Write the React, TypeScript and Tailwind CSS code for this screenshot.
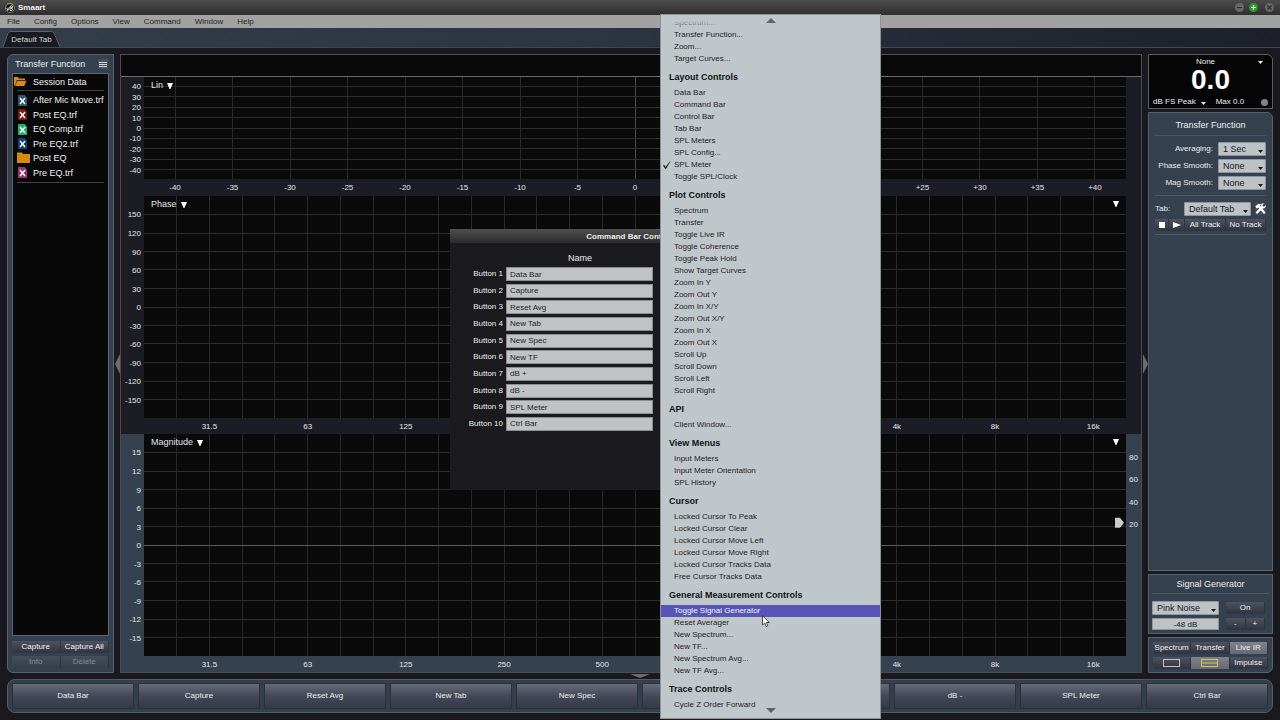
import { type ReactNode } from 'react';

const menuBar = ['File', 'Config', 'Options', 'View', 'Command', 'Window', 'Help'];

const commands = [
  'Data Bar',
  'Capture',
  'Reset Avg',
  'New Tab',
  'New Spec',
  'New TF',
  'dB +',
  'dB -',
  'SPL Meter',
  'Ctrl Bar',
];

const sessionItems = [
  { name: 'After Mic Move.trf', color: '#2f5676' },
  { name: 'Post EQ.trf', color: '#7a1512' },
  { name: 'EQ Comp.trf', color: '#1fae72' },
  { name: 'Pre EQ2.trf', color: '#173f80' },
  { name: 'Post EQ', color: null },
  { name: 'Pre EQ.trf', color: '#9a3573' },
];

const menuSections = [
  { title: null, items: ['Spectrum...', 'Transfer Function...', 'Zoom...', 'Target Curves...'] },
  {
    title: 'Layout Controls',
    items: [
      'Data Bar',
      'Command Bar',
      'Control Bar',
      'Tab Bar',
      'SPL Meters',
      'SPL Config...',
      'SPL Meter',
      'Toggle SPL/Clock',
    ],
  },
  {
    title: 'Plot Controls',
    items: [
      'Spectrum',
      'Transfer',
      'Toggle Live IR',
      'Toggle Coherence',
      'Toggle Peak Hold',
      'Show Target Curves',
      'Zoom In Y',
      'Zoom Out Y',
      'Zoom In X/Y',
      'Zoom Out X/Y',
      'Zoom In X',
      'Zoom Out X',
      'Scroll Up',
      'Scroll Down',
      'Scroll Left',
      'Scroll Right',
    ],
  },
  { title: 'API', items: ['Client Window...'] },
  { title: 'View Menus', items: ['Input Meters', 'Input Meter Orientation', 'SPL History'] },
  {
    title: 'Cursor',
    items: [
      'Locked Cursor To Peak',
      'Locked Cursor Clear',
      'Locked Cursor Move Left',
      'Locked Cursor Move Right',
      'Locked Cursor Tracks Data',
      'Free Cursor Tracks Data',
    ],
  },
  {
    title: 'General Measurement Controls',
    items: [
      'Toggle Signal Generator',
      'Reset Averager',
      'New Spectrum...',
      'New TF...',
      'New Spectrum Avg...',
      'New TF Avg...',
    ],
  },
  { title: 'Trace Controls', items: ['Cycle Z Order Forward'] },
];

// Axis marks: position in percent of the plot, optional label
interface Tick {
  at: number;
  label?: string;
  strong?: boolean;
}

const timeTicks: Tick[] = Array.from({ length: 17 }, (_, i) => {
  const v = (i - 8) * 5;
  return { at: 50 + (v / 85.4) * 100, label: v > 0 ? `+${v}` : `${v}`, strong: v === 0 };
});

const bands = ['31.5', '63', '125', '250', '500', '1k', '2k', '4k', '8k', '16k'];
const freqTicks: Tick[] = Array.from({ length: 29 }, (_, i) => ({
  at: ((i + 1) / 30) * 100,
  label: i % 3 === 1 ? bands[(i - 1) / 3] : undefined,
}));

const levelTicks = (step: number, count: number, range: number, strongZero = false): Tick[] =>
  Array.from({ length: count * 2 + 1 }, (_, i) => {
    const v = (count - i) * step;
    return { at: 50 - (v / range) * 50, label: `${v}`, strong: strongZero && v === 0 };
  });

interface PlotProps {
  title: string;
  xTicks: Tick[];
  yTicks: Tick[];
  className: string;
  corner?: boolean;
  children?: ReactNode;
}

const Plot = ({ title, xTicks, yTicks, className, corner, children }: PlotProps) => (
  <section className={`flex min-h-0 pl-[23px] pr-[15px] ${className}`}>
    <div className="relative flex-1 bg-[#0a0a0a]">
      <svg className="absolute inset-0 h-full w-full overflow-visible" fontSize="8" fill="#e4e6e8">
        <g shapeRendering="crispEdges">
          {xTicks.map((t) => (
            <line
              key={t.at}
              x1={`${t.at}%`}
              x2={`${t.at}%`}
              y1="0"
              y2="100%"
              stroke={t.strong ? '#484848' : '#292929'}
            />
          ))}
          {yTicks.map((t) => (
            <line
              key={t.at}
              x1="0"
              x2="100%"
              y1={`${t.at}%`}
              y2={`${t.at}%`}
              stroke={t.strong ? '#5a5a5a' : '#2d2d2d'}
            />
          ))}
        </g>
        {xTicks.map((t) => (
          <text key={t.at} x={`${t.at}%`} y="100%" dy="11" textAnchor="middle">
            {t.label}
          </text>
        ))}
        {yTicks.map((t) => (
          <text key={t.at} x="-3" y={`${t.at}%`} dy="3" textAnchor="end">
            {t.label}
          </text>
        ))}
        {children}
      </svg>
      <button className="absolute left-[7px] top-[3px] flex items-center gap-[4px] text-[9px] leading-[11px] text-[#e4e6e8]">
        {title}
        <Triangle />
      </button>
      {corner && (
        <button aria-label={`${title} options`} className="absolute right-[7px] top-[5px]">
          <Triangle />
        </button>
      )}
    </div>
  </section>
);

const Triangle = () => (
  <svg width="6" height="6" viewBox="0 0 6 6" fill="#fff">
    <path d="M0 0h6L3.4 6h-.8z" />
  </svg>
);

const SmallCaret = ({ className }: { className: string }) => (
  <svg width="5" height="3" viewBox="0 0 5 3" className={className} fill="currentColor">
    <path d="M0 0h5L2.5 3z" />
  </svg>
);

interface PickerProps {
  id: string;
  label: string;
  value: string;
  className: string;
}

const Picker = ({ id, label, value, className }: PickerProps) => (
  <div className={`relative ${className}`}>
    <select
      id={id}
      aria-label={label}
      className="block h-[14px] w-full appearance-none rounded-[1px] border border-[#8f969b] bg-[#bcc2c6] pl-[4px] text-[9px] leading-[12px] text-[#15181b]"
    >
      <option>{value}</option>
    </select>
    <SmallCaret className="pointer-events-none absolute bottom-[3px] right-[3px] text-[#15181b]" />
  </div>
);

const PanelButton = ({
  children,
  active,
  dim,
  label,
}: {
  children: ReactNode;
  active?: boolean;
  dim?: boolean;
  label?: string;
}) => (
  <button
    aria-label={label}
    className={`flex h-[12px] items-center justify-center whitespace-nowrap border-r border-[#30343f] bg-linear-to-b text-[8px] leading-[12px] ${
      active ? 'from-[#7e828c] to-[#666a76]' : dim ? 'from-[#46505d] to-[#343f4b]' : 'from-[#4d5362] to-[#30343f]'
    } ${dim ? 'text-[#838b94]' : 'text-[#f0f1f3]'}`}
  >
    {children}
  </button>
);

const FolderIcon = ({ open }: { open?: boolean }) => (
  <svg width="13" height="12" viewBox="0 0 13 12" fill="#d98a0c">
    {open ? (
      <>
        <path d="M0 1h4l1 1.500h6V4H3L1 9.500H0z" />
        <path d="M3.300 4.800H12.500L10.300 10H1z" />
      </>
    ) : (
      <path d="M0 .5h5l1 1.500h7V11H0z" />
    )}
  </svg>
);

const TraceIcon = ({ color }: { color: string }) => (
  <svg width="9" height="11" viewBox="0 0 9 11">
    <path d="M0 0h6.500L9 2.500V11H0z" fill={color} />
    <path d="M2 3l5 6M7 3L2 9" stroke="#fff" strokeWidth="1.400" />
  </svg>
);

const TitleBar = () => (
  <header className="flex h-[15px] items-center bg-linear-to-b from-[#4c4c4c] to-[#2f2f2f] pl-[5px] pr-[6px]">
    <svg width="10" height="10" viewBox="0 0 10 10">
      <circle cx="5" cy="5" r="4.500" fill="#16181a" stroke="#8a9188" strokeWidth=".8" />
      <path d="M2 .9A5 5 0 0 1 8.500 2" stroke="#c9a24a" fill="none" strokeWidth=".9" />
      <path d="M1.800 5l1 2.500L4.500 4" stroke="#e8e8e8" fill="none" strokeWidth=".9" />
      <circle cx="6.500" cy="3.800" r="1.100" stroke="#fff" fill="none" strokeWidth=".9" />
      <circle cx="6.100" cy="6.300" r="1.300" stroke="#fff" fill="none" strokeWidth=".9" />
    </svg>
    <h1 className="ml-[3px] text-[8px] font-bold leading-[10px] text-[#f4f4f4]">Smaart</h1>
    <div className="ml-auto flex items-center gap-[5px]">
      <button aria-label="Minimize">
        <svg width="9" height="9" viewBox="0 0 9 9" className="block">
          <circle cx="4.500" cy="4.500" r="4.500" fill="#686868" />
          <path d="M2 4.500h5" stroke="#2c2c2c" />
        </svg>
      </button>
      <button aria-label="Maximize">
        <svg width="9" height="9" viewBox="0 0 9 9" className="block">
          <circle cx="4.500" cy="4.500" r="4.500" fill="#2c9a2c" />
          <path d="M2 4.500h5M4.500 2v5" stroke="#d8f2d8" strokeWidth="1.200" />
        </svg>
      </button>
      <button aria-label="Close" className="ml-[2px]">
        <svg width="9" height="9" viewBox="0 0 9 9" className="block">
          <circle cx="4.500" cy="4.500" r="4.500" fill="#686868" />
          <path d="M2.500 2.500l4 4M6.500 2.500l-4 4" stroke="#2c2c2c" strokeWidth="1.200" />
        </svg>
      </button>
    </div>
  </header>
);

const TabBar = () => (
  <div className="flex h-[20px] items-end border-b border-[#3d4954] bg-linear-to-r from-[#333e4b] via-[#2b3440] to-[#1d2029] pl-[3px]">
    <button className="relative h-[16px] w-[57px] text-[8px] leading-[15px] text-[#d5d8da]">
      <svg
        className="absolute inset-0 h-full w-full"
        viewBox="0 0 57 16"
        preserveAspectRatio="none"
        fill="#1a1a20"
        stroke="#56616b"
      >
        <path d="M0 16L5 2Q6 .5 8 .5H48Q50 .5 51 2L57 16" />
      </svg>
      <span className="relative">Default Tab</span>
    </button>
  </div>
);

const SessionPanel = () => (
  <aside className="flex w-[107px] shrink-0 flex-col rounded-tl-md rounded-bl-md border border-[#56626d] bg-[#35414e] px-[4px] pb-[4px]">
    <div className="flex h-[18px] items-center justify-between pl-[3px] pr-[1px]">
      <h2 className="text-[9px] leading-[12px] text-[#eceef0]">Transfer Function</h2>
      <button aria-label="Panel menu" className="flex h-[10px] w-[10px] flex-col justify-center gap-px bg-[#4b5160] px-px">
        <span className="h-px bg-[#d4d6da]" />
        <span className="h-px bg-[#d4d6da]" />
        <span className="h-px bg-[#d4d6da]" />
      </button>
    </div>
    <div className="flex-1 border border-[#5b6671] bg-[#080808] text-[9px] leading-[12px] text-[#f0f1f2]">
      <div className="flex h-[16px] items-center gap-[6px] pl-px">
        <FolderIcon open />
        Session Data
      </div>
      <ul className="mx-[4px] flex h-[93px] flex-col border-y border-[#3f444b] py-[2px]">
        {sessionItems.map((item) => (
          <li key={item.name} className="flex flex-1 items-center whitespace-nowrap">
            <span className={item.color ? 'w-[16px] pl-px' : 'w-[16px]'}>
              {item.color ? <TraceIcon color={item.color} /> : <FolderIcon />}
            </span>
            {item.name}
          </li>
        ))}
      </ul>
    </div>
    <div className="mt-[5px] grid grid-cols-2 gap-y-[3px]">
      <PanelButton>Capture</PanelButton>
      <PanelButton>Capture All</PanelButton>
      <PanelButton dim>Info</PanelButton>
      <PanelButton dim>Delete</PanelButton>
    </div>
  </aside>
);

const Collapser = ({ label, flip }: { label: string; flip?: boolean }) => (
  <button aria-label={label} className="flex w-[6px] shrink-0 items-center justify-center">
    <svg width="5" height="20" viewBox="0 0 5 20" fill="#6d6d70">
      <path d={flip ? 'M0 0v20l5-10z' : 'M5 0v20L0 10z'} />
    </svg>
  </button>
);

const Plots = () => (
  <main className="flex min-w-0 flex-1 flex-col border border-[#4a4d52] bg-[#1c1d24]">
    <div className="h-[22px] shrink-0 border-b border-[#6a6c6f] bg-[#090909]" />
    <Plot
      title="Lin"
      xTicks={timeTicks}
      yTicks={levelTicks(10, 4, 49)}
      className="flex-[102_1_0] pb-[17px]"
    />
    <Plot
      title="Phase"
      xTicks={freqTicks}
      yTicks={levelTicks(30, 5, 180)}
      className="flex-[222_1_0] pb-[16px]"
      corner
    />
    <Plot
      title="Magnitude"
      xTicks={freqTicks}
      yTicks={levelTicks(3, 5, 18, true)}
      className="flex-[222_1_0] bg-[#35414e] pb-[16px]"
      corner
    >
      {/* Coherence scale */}
      {[80, 60, 40, 20].map((v) => (
        <text key={v} x="100%" dx="3" y={`${50 - v / 2}%`} dy="4">
          {v}
        </text>
      ))}
      <svg x="100%" y="40%" overflow="visible">
        <path d="M-11-5h5l4 5-4 5h-5z" fill="#c9cacb" />
      </svg>
    </Plot>
  </main>
);

const Divider = ({ className }: { className: string }) => (
  <hr className={`border-t border-[#4b5763] ${className}`} />
);

const averagingRows = [
  { id: 'averaging', label: 'Averaging:', value: '1 Sec' },
  { id: 'phase-smooth', label: 'Phase Smooth:', value: 'None' },
  { id: 'mag-smooth', label: 'Mag Smooth:', value: 'None' },
];

const ControlBar = () => (
  <aside className="flex w-[125px] shrink-0 flex-col gap-[3px] text-[#eceef0]">
    <section className="flex h-[55px] flex-col rounded-tr-md border border-[#5a5d62] bg-[#050505]">
      <button className="relative h-[13px] text-[8px] leading-[14px]" aria-label="Input source: None">
        <span className="pr-[10px]">None</span>
        <SmallCaret className="absolute right-[9px] top-[6px]" />
      </button>
      <div className="text-center text-[28px] font-bold leading-[24px] text-white">0.0</div>
      <div className="mt-[3px] flex items-center pl-[4px] pr-[4px] text-[8px] leading-[14px]">
        <button className="flex items-center gap-[5px]">
          dB FS Peak
          <SmallCaret className="mt-[3px]" />
        </button>
        <span className="ml-[10px]">Max 0.0</span>
        <span className="ml-auto h-[7px] w-[7px] rounded-full bg-[#848484]" />
      </div>
    </section>

    <section className="flex-1 rounded-tr-md border border-[#56626d] bg-[#35414e] px-[6px]">
      <h2 className="pt-[6px] text-center text-[9px] leading-[12px]">Transfer Function</h2>
      <Divider className="mt-[4px]" />
      <div className="mt-[6px] flex flex-col gap-[3px]">
        {averagingRows.map((row) => (
          <div key={row.id} className="flex items-center justify-end gap-[5px]">
            <label htmlFor={row.id} className="whitespace-nowrap text-[8px] leading-[14px]">
              {row.label}
            </label>
            <Picker {...row} className="w-[48px]" />
          </div>
        ))}
      </div>
      <Divider className="mt-[5px]" />
      <div className="mt-[6px] flex items-center justify-between">
        <label htmlFor="tab" className="text-[8px] leading-[14px]">
          Tab:
        </label>
        <div className="flex items-center gap-[4px]">
          <Picker id="tab" label="Tab:" value="Default Tab" className="w-[67px]" />
          <button aria-label="Configure tab" className="bg-[#454c5a]">
            <svg width="11" height="12" viewBox="0 0 11 12" className="block" fill="#fff">
              <path d="M.3 3.600L3.200 1H6.200L4.900 2.600L10.500 9.400L9 10.900L3.400 4.600L1.800 5.400z" />
              <path d="M10.600 2.300L9 3.800L7.600 3.300L7.400 1.900L8.900.4C7 0 5.500 1.600 6 3.600L.6 9.400L2.100 10.900L7.500 5.400C9.500 5.800 11.200 4.300 10.600 2.300z" />
            </svg>
          </button>
        </div>
      </div>
      <div className="mt-[3px] grid grid-cols-[14px_16px_41px_40px]">
        <PanelButton label="Stop">
          <svg width="6" height="6" fill="#fff">
            <rect width="6" height="6" />
          </svg>
        </PanelButton>
        <PanelButton label="Play">
          <svg width="8" height="6" fill="#fff">
            <path d="M0 0l8 3-8 3z" />
          </svg>
        </PanelButton>
        <PanelButton>All Track</PanelButton>
        <PanelButton>No Track</PanelButton>
      </div>
      <Divider className="mt-[3px]" />
    </section>

    <section className="h-[60px] border border-[#56626d] bg-[#35414e] px-[3px]">
      <h2 className="pt-[3px] text-center text-[9px] leading-[12px]">Signal Generator</h2>
      <Divider className="mt-[3px]" />
      <div className="mt-[7px] grid grid-cols-[67px_39px] gap-x-[7px] gap-y-[3px]">
        <Picker id="signal" label="Signal type" value="Pink Noise" className="w-full" />
        <div className="grid items-center">
          <PanelButton>On</PanelButton>
        </div>
        <input
          aria-label="Output level"
          defaultValue="-48 dB"
          className="h-[12px] w-full border border-[#8f969b] bg-[#bcc2c6] text-center text-[8px] leading-[10px] text-[#15181b]"
        />
        <div className="grid grid-cols-2">
          <PanelButton>-</PanelButton>
          <PanelButton>+</PanelButton>
        </div>
      </div>
    </section>

    <section className="grid h-[36px] grid-cols-3 content-center gap-y-[3px] rounded-br-md border border-[#56626d] bg-[#35414e] px-[4px]">
      <PanelButton>Spectrum</PanelButton>
      <PanelButton>Transfer</PanelButton>
      <PanelButton active>Live IR</PanelButton>
      <PanelButton label="Single plot">
        <svg width="17" height="8" fill="none" stroke="#c0c3ca">
          <rect x=".5" y=".5" width="16" height="7" />
        </svg>
      </PanelButton>
      <PanelButton active label="Split plot">
        <svg width="17" height="8" fill="none" stroke="#cfc64a">
          <rect x=".5" y=".5" width="16" height="7" />
          <path d="M0 4h17" />
        </svg>
      </PanelButton>
      <PanelButton>Impulse</PanelButton>
    </section>
  </aside>
);

const CommandBar = () => (
  <nav className="mx-[7px] grid h-[34px] grid-cols-10 gap-[4px] rounded-lg border border-[#515c67] bg-[#333f4b] px-[4px] py-[3px]">
    {commands.map((name) => (
      <button
        key={name}
        className="border border-[#2c323d] bg-linear-to-b from-[#686b77] via-[#454859] to-[#343848] text-[8px] leading-[12px] text-[#eceef0]"
      >
        {name}
      </button>
    ))}
  </nav>
);

const CommandDialog = () => (
  <div
    role="dialog"
    aria-label="Command Bar Configuration"
    className="absolute left-[450px] top-[229px] h-[261px] w-[382px] bg-[#1a1a1f] text-[#eceef0]"
  >
    <h2 className="h-[14px] bg-linear-to-b from-[#505050] to-[#2c2c2c] text-center text-[8px] font-bold leading-[15px]">
      Command Bar Configuration
    </h2>
    <div className="w-[203px] pl-[12px]">
      <div className="pl-[45px] pt-[8px] text-center text-[9px] leading-[14px]">Name</div>
      <div className="mt-[2px] flex h-[164px] flex-col justify-between">
        {commands.map((name, i) => (
          <div key={name} className="flex items-center justify-end gap-[3px]">
            <label htmlFor={`button-${i}`} className="whitespace-nowrap text-[8px] leading-[14px]">
              Button {i + 1}
            </label>
            <input
              id={`button-${i}`}
              defaultValue={name}
              className="h-[14px] w-[147px] border border-[#8c8f92] bg-[#c0c3c6] pl-[3px] text-[8px] leading-[12px] text-[#1c1e20]"
            />
          </div>
        ))}
      </div>
    </div>
  </div>
);

const CommandMenu = () => (
  <div
    role="menu"
    className="absolute left-[660px] top-[14px] w-[221px] border border-[#8d9295] bg-[#c0c7ca] pb-[7px] pt-[2px] text-[8px] text-[#1e2124]"
  >
    {menuSections.map((section, s) => (
      <div key={s}>
        {section.title && (
          <h3 className="h-[22px] pl-[8px] pt-[3px] text-[9px] font-bold leading-[19px] text-[#101214]">
            {section.title}
          </h3>
        )}
        {section.items.map((item) => (
          <button
            key={item}
            role="menuitem"
            className={`relative block h-[12px] w-full pl-[13px] text-left leading-[12px] ${
              item === 'Toggle Signal Generator' ? 'bg-[#5755b6] text-[#f2f2fa]' : ''
            }`}
          >
            {item === 'SPL Meter' && (
              <svg width="8" height="8" viewBox="0 0 8 8" className="absolute left-[2px] top-[2px]" fill="#101214">
                <path d="M0 4.500l1.200-.6L2.600 6 7 .2l.4.3L3 7.800H2.200z" />
              </svg>
            )}
            {item}
          </button>
        ))}
      </div>
    ))}
    {/* Scroll arrows */}
    <div className="absolute inset-x-0 top-0 flex h-[14px] justify-center bg-linear-to-b from-[#c0c7ca] from-40% to-transparent pt-[3px]">
      <svg width="10" height="5" viewBox="0 0 10 5" fill="#5f6467">
        <path d="M5 0l5 5H0z" />
      </svg>
    </div>
    <div className="absolute inset-x-0 bottom-[5px] flex justify-center">
      <svg width="10" height="5" viewBox="0 0 10 5" fill="#5f6467">
        <path d="M5 5l5-5H0z" />
      </svg>
    </div>
  </div>
);

export default function App() {
  return (
    <div className="relative flex min-h-screen flex-col bg-[#19191f] pb-[7px] font-['Liberation_Sans',Arial,sans-serif]">
      <TitleBar />
      <nav className="flex h-[13px] items-center gap-[14px] bg-[#a2a2a2] pl-[7px] pt-px text-[8px] leading-[12px] text-[#232323]">
        {menuBar.map((item) => (
          <button key={item}>{item}</button>
        ))}
      </nav>
      <TabBar />
      <div className="flex flex-1 px-[7px] pt-[6px]">
        <SessionPanel />
        <Collapser label="Hide session panel" />
        <Plots />
        <Collapser label="Hide control bar" flip />
        <ControlBar />
      </div>
      <button aria-label="Hide command bar" className="flex h-[6px] items-center justify-center">
        <svg width="20" height="4" viewBox="0 0 20 4" fill="#6d6d70">
          <path d="M0 0h20L10 4z" />
        </svg>
      </button>
      <CommandBar />

      <CommandDialog />
      <CommandMenu />

      {/* Mouse pointer */}
      <svg className="pointer-events-none absolute left-[762px] top-[615px]" width="8" height="12" viewBox="0 0 8 12">
        <path d="M.5.500V10l2.200-2 1.500 3.500 1.600-.7L4.300 7.500h3z" fill="#fff" stroke="#222" strokeWidth=".8" />
      </svg>
    </div>
  );
}
